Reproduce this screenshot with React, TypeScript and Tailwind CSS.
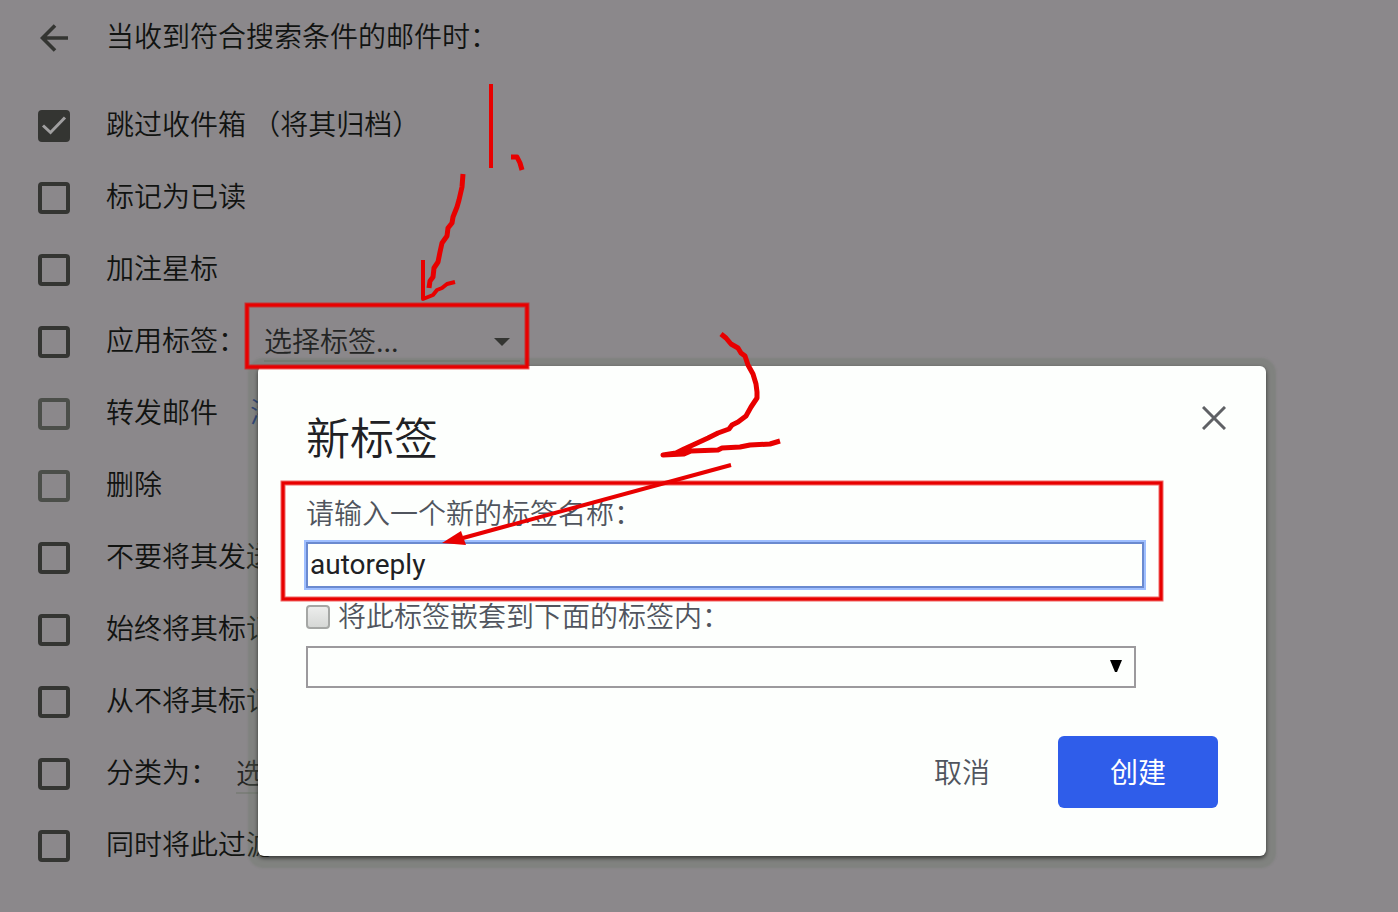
import { useState } from 'react'

type FilterAction = {
  id: string
  label: string
  checked?: boolean
  dimmed?: boolean
  link?: string
  options?: string
}

const actions: FilterAction[] = [
  { id: 'archive', label: '跳过收件箱 （将其归档）', checked: true },
  { id: 'read', label: '标记为已读' },
  { id: 'star', label: '加注星标' },
  { id: 'apply-label', label: '应用标签：', options: '选择标签...' },
  { id: 'forward', label: '转发邮件', dimmed: true, link: '添加' },
  { id: 'delete', label: '删除', dimmed: true },
  { id: 'never-spam', label: '不要将其发送' },
  { id: 'always-important', label: '始终将其标记' },
  { id: 'never-important', label: '从不将其标记' },
  { id: 'categorize', label: '分类为：', options: '选择类别...' },
  { id: 'also-apply', label: '同时将此过滤' },
]

function ActionRow({ action }: { action: FilterAction }) {
  const [checked, setChecked] = useState(!!action.checked)

  return (
    <li className="flex h-18 items-center">
      <span className="relative mr-9 flex shrink-0">
        <input
          id={action.id}
          type="checkbox"
          checked={checked}
          onChange={(e) => setChecked(e.target.checked)}
          className={`size-8 appearance-none rounded-sm border-4 checked:bg-[#343532] ${
            action.dimmed ? 'border-[#4b4e49]' : 'border-[#343532]'
          }`}
        />
        {checked && (
          <svg viewBox="0 0 32 32" className="pointer-events-none absolute inset-0 size-8">
            <path d="M5 15.5L12.5 22.5L27 7.5" fill="none" stroke="#a09fa0" strokeWidth="3" />
          </svg>
        )}
      </span>
      <label htmlFor={action.id} className="pb-1.5 whitespace-nowrap">
        {action.label}
      </label>
      {action.link && (
        <a href="#forwarding" className="ml-8 pb-1.5 whitespace-nowrap text-[#20387c]">
          {action.link}
        </a>
      )}
      {action.options && (
        <span className="relative ml-[18px] flex w-64">
          <select
            aria-label={action.label}
            className="h-10 w-full appearance-none border-b-2 border-[#7c7e7a] pb-1.5 text-[#242524]"
          >
            <option>{action.options}</option>
          </select>
          <svg viewBox="0 0 16 8" className="pointer-events-none absolute top-4 right-2.5 h-2 w-4">
            <path d="M0 0H16L8 8Z" fill="#343532" />
          </svg>
        </span>
      )}
    </li>
  )
}

function NewLabelDialog() {
  const [name, setName] = useState('autoreply')

  return (
    <div
      role="dialog"
      aria-labelledby="dialog-title"
      className="absolute top-[366px] right-[132px] left-[258px] rounded-md bg-[#fdfffd] pb-12 text-[#50555e] shadow-[0_2px_4px_rgba(0,0,0,0.6),0_2px_2px_10px_rgba(100,115,95,0.27)]"
    >
      <div className="flex items-start justify-between pt-10 pr-10 pl-12">
        <h2 id="dialog-title" className="text-[44px] leading-15 text-[#202124]">
          新标签
        </h2>
        <button aria-label="关闭">
          <svg viewBox="0 0 24 24" className="size-6">
            <path d="M1 1L23 23M23 1L1 23" stroke="#5f6165" strokeWidth="3" />
          </svg>
        </button>
      </div>

      <div className="mt-8 px-12">
        <label htmlFor="label-name" className="block leading-7">
          请输入一个新的标签名称：
        </label>
        <div className="mt-4 pr-[74px]">
          <input
            id="label-name"
            type="text"
            value={name}
            onChange={(e) => setName(e.target.value)}
            className="block h-[46px] w-full border-2 border-[#6a8acf] px-0.5 pb-0.5 font-[Roboto,'Noto_Sans_CJK_SC',sans-serif] font-normal text-[#202124] shadow-[0_0_0_2px_#9fbfff] outline-none"
          />
        </div>

        <div className="mt-3 flex h-[34px] items-center gap-2">
          <input
            id="nest"
            type="checkbox"
            className="size-6 appearance-none rounded-sm border-2 border-[#a5a7a5] bg-linear-to-b from-[#ecedec] to-[#d6d8d6]"
          />
          <label htmlFor="nest" className="pb-1">
            将此标签嵌套到下面的标签内：
          </label>
        </div>

        <div className="mt-3 pr-[82px]">
          <div className="relative">
            <select
              aria-label="上级标签"
              className="block h-[42px] w-full appearance-none border-2 border-[#9c9a9d]"
            />
            <svg viewBox="0 0 12 12" className="pointer-events-none absolute top-3.5 right-3.5 size-3">
              <path d="M0 0H12L7 12H5Z" fill="#000" />
            </svg>
          </div>
        </div>

        <div className="mt-12 flex justify-end gap-5">
          <button className="h-18 px-12 pb-0.5">取消</button>
          <button className="h-18 w-40 rounded-md bg-[#2f5dea] pb-0.5 font-normal text-white">创建</button>
        </div>
      </div>
    </div>
  )
}

// Hand-drawn red marks on top of everything
function Annotations() {
  return (
    <svg
      viewBox="0 0 1398 912"
      className="pointer-events-none absolute top-0 left-0 h-[912px] w-[1398px]"
      fill="none"
      stroke="#e80000"
      strokeWidth="5"
      strokeLinejoin="round"
    >
      <g strokeWidth="5" strokeOpacity="0.6" strokeLinejoin="miter">
        <rect x="247" y="305" width="280" height="62" />
        <rect x="283" y="483" width="878" height="116" />
      </g>
      <g strokeWidth="3" strokeLinejoin="miter">
        <rect x="247" y="305" width="280" height="62" />
        <rect x="283" y="483" width="878" height="116" />
      </g>

      <path d="M491 84V168" strokeWidth="4" />
      <path d="M511 157L517 157L520 163L522 170" />
      <path d="M463 174L462 187L459 200L457 207L453 217L452 223L448 228L447 236L442 243L440 252L438 262L434 268L433 277L430 281L429 288" />
      <path d="M423 260V299L433 295L437 290L442 288L447 284L455 282" strokeWidth="4" />

      <path d="M721 334L726 338L731 344L738 348L741 353L745 356L748 365L753 374L756 384L757 392L757 398L751 407L746 416L738 422L732 425L729 429L718 433L708 438L695 444L684 449L676 453L663 455L684 454L691 451L718 450L722 448L740 447L750 445L770 444L780 441" />
      <path d="M678 453L690 448" />
      <path d="M731 465L463 538" strokeWidth="4" />
      <path d="M442 543L461 531L466 545Z" fill="#e80000" stroke="none" />
    </svg>
  )
}

export default function App() {
  return (
    <div className="relative min-h-screen overflow-hidden bg-[#8b888b] font-['Noto_Sans_CJK_SC',sans-serif] text-[28px] leading-9 font-[350] text-[#111311]">
      <header className="flex h-19 items-center pl-10">
        <button aria-label="返回" className="mr-[38px]">
          <svg viewBox="0 0 28 28" className="size-7">
            <path d="M28 14H3M15 1.5L2.5 14L15 26.5" fill="none" stroke="#343532" strokeWidth="3.6" />
          </svg>
        </button>
        <h1 className="pb-1.5">当收到符合搜索条件的邮件时：</h1>
      </header>

      <ul className="pt-3.5 pl-[38px]">
        {actions.map((action) => (
          <ActionRow key={action.id} action={action} />
        ))}
      </ul>

      <NewLabelDialog />
      <Annotations />
    </div>
  )
}
